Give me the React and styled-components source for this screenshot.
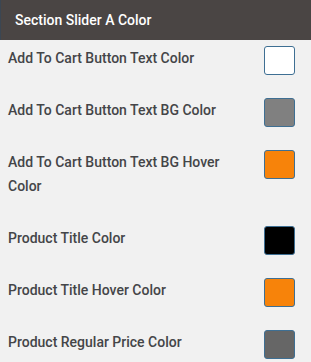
import React from 'react'
import styled, { createGlobalStyle } from 'styled-components'

const GlobalStyle = createGlobalStyle`
  html, body {
    margin: 0;
    padding: 0;
    background: #f1f1f1;
  }
  body {
    font-family: Roboto, "Liberation Sans", sans-serif;
  }
`;

const Panel = styled.div`
  width: 311px;
  min-height: 362px;
  background: #f1f1f1;
`;

const Header = styled.div`
  height: 40px;
  display: flex;
  align-items: center;
  padding-left: 14px;
  background: #4a4544;
  border-left: 1px solid #3b4652;
  color: #fff;
  font-size: 14px;
  font-weight: 500;
  box-sizing: border-box;
`;

const Row = styled.div`
  display: flex;
  align-items: flex-start;
  justify-content: space-between;
  padding: 6px 16px 0 8px;
`;

const Label = styled.div`
  width: 230px;
  padding-bottom: 22px;
  font-size: 14px;
  line-height: 24px;
  font-weight: 500;
  color: #444548;
`;

const Swatch = styled.div`
  width: 31px;
  height: 29px;
  box-sizing: border-box;
  border: 1px solid #3e6f93;
  border-radius: 3px;
  background: ${p => p.color};
`;

const rows = [
  { label: 'Add To Cart Button Text Color', color: '#ffffff' },
  { label: 'Add To Cart Button Text BG Color', color: '#808080' },
  { label: 'Add To Cart Button Text BG Hover Color', color: '#f7830a' },
  { label: 'Product Title Color', color: '#000000' },
  { label: 'Product Title Hover Color', color: '#f7830a' },
  { label: 'Product Regular Price Color', color: '#666666' },
]

export default function App() {
  return (
    <Panel>
      <GlobalStyle />
      <Header>Section Slider A Color</Header>
      {rows.map(r => (
        <Row key={r.label}>
          <Label>{r.label}</Label>
          <Swatch color={r.color} />
        </Row>
      ))}
    </Panel>
  )
}
